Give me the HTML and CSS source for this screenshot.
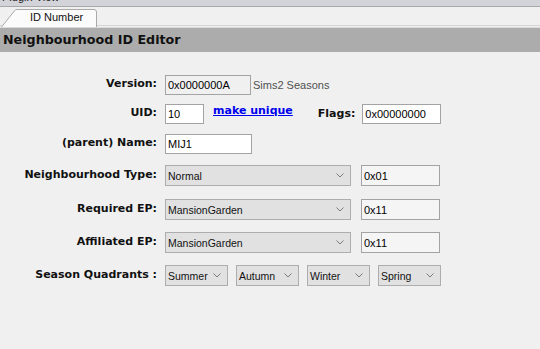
FILE: index.html
```html
<!DOCTYPE html>
<html lang="en">
<head>
  <meta charset="UTF-8">
  <title>Plugin View - ID Number</title>
  <link rel="stylesheet" href="styles.css">
</head>
<body>
<div class="titlebar"><span>Plugin View</span></div>

<div class="tabstrip">
  <div class="tab">
    <svg class="tab-shape" width="97" height="18" viewBox="0 0 97 18">
      <path d="M0.5 18 L13.5 1.8 Q14.5 0.5 16 0.5 L93 0.5 Q95.5 0.5 95.5 3 L95.5 18" fill="#fbfbfb" stroke="#a9a9a9"/>
    </svg>
    <span class="tab-label">ID Number</span>
  </div>
</div>

<div class="header">Neighbourhood ID Editor</div>

<div class="form">
  <div class="row">
    <div class="label">Version:</div>
    <input class="field readonly w-version" value="0x0000000A" readonly>
    <span class="note">Sims2 Seasons</span>
  </div>

  <div class="row">
    <div class="label">UID:</div>
    <input class="field w-uid" value="10">
    <a class="link" href="#">make unique</a>
    <div class="label label-inline">Flags:</div>
    <input class="field w-flags" value="0x00000000">
  </div>

  <div class="row row-name">
    <div class="label">(parent) Name:</div>
    <input class="field w-name" value="MIJ1">
  </div>

  <div class="row row-type">
    <div class="label">Neighbourhood Type:</div>
    <div class="combo w-combo"><span>Normal</span><svg class="chev" width="8" height="5" viewBox="0 0 8 5"><path d="M0.5 0.5 L4 4 L7.5 0.5" fill="none" stroke="#7a7a7a"/></svg></div>
    <input class="field hex" value="0x01">
  </div>

  <div class="row row-combo">
    <div class="label">Required EP:</div>
    <div class="combo w-combo"><span>MansionGarden</span><svg class="chev" width="8" height="5" viewBox="0 0 8 5"><path d="M0.5 0.5 L4 4 L7.5 0.5" fill="none" stroke="#7a7a7a"/></svg></div>
    <input class="field hex" value="0x11">
  </div>

  <div class="row row-combo">
    <div class="label">Affiliated EP:</div>
    <div class="combo w-combo"><span>MansionGarden</span><svg class="chev" width="8" height="5" viewBox="0 0 8 5"><path d="M0.5 0.5 L4 4 L7.5 0.5" fill="none" stroke="#7a7a7a"/></svg></div>
    <input class="field hex" value="0x11">
  </div>

  <div class="row row-combo">
    <div class="label">Season Quadrants :</div>
    <div class="seasons">
      <div class="combo w-season"><span>Summer</span><svg class="chev" width="8" height="5" viewBox="0 0 8 5"><path d="M0.5 0.5 L4 4 L7.5 0.5" fill="none" stroke="#7a7a7a"/></svg></div>
      <div class="combo w-season"><span>Autumn</span><svg class="chev" width="8" height="5" viewBox="0 0 8 5"><path d="M0.5 0.5 L4 4 L7.5 0.5" fill="none" stroke="#7a7a7a"/></svg></div>
      <div class="combo w-season"><span>Winter</span><svg class="chev" width="8" height="5" viewBox="0 0 8 5"><path d="M0.5 0.5 L4 4 L7.5 0.5" fill="none" stroke="#7a7a7a"/></svg></div>
      <div class="combo w-season"><span>Spring</span><svg class="chev" width="8" height="5" viewBox="0 0 8 5"><path d="M0.5 0.5 L4 4 L7.5 0.5" fill="none" stroke="#7a7a7a"/></svg></div>
    </div>
  </div>
</div>
</body>
</html>
```

FILE: styles.css
```css
body {
  margin: 0;
  background-color: #f0f0f0;
  font-family: "Liberation Sans", Arial, sans-serif;
  font-size: 11px;
  color: #000;
  height: 349px;
  overflow: hidden;
}
.titlebar {
  height: 6px;
  background-color: #d3d3da;
  border-bottom: 1px solid #a8a8a8;
  overflow: hidden;
}
.titlebar span {
  display: block;
  margin-top: -9px;
  padding-left: 2px;
  line-height: 13px;
  color: #222;
}
.tabstrip {
  height: 16px;
  padding-top: 2px;
  border-bottom: 1px solid #d4d4d4;
}
.tab {
  position: relative;
  width: 97px;
  height: 17px;
  margin-left: 1px;
}
.tab-shape {
  position: absolute;
  left: 0;
  top: 0;
}
.tab-label {
  position: relative;
  display: block;
  padding-left: 29px;
  line-height: 17px;
  color: #111;
}
.header {
  margin-top: 1px;
  border-top: 1px solid #dadada;
  height: 24px;
  line-height: 24px;
  background-color: #acacac;
  padding-left: 3px;
  font-family: "DejaVu Sans", Verdana, sans-serif;
  font-weight: bold;
  font-size: 12.7px;
  color: #111;
}
.form {
  display: flex;
  flex-direction: column;
  padding-top: 23px;
}
.row {
  display: flex;
  align-items: center;
  height: 20px;
  margin-bottom: 9px;
}
.row-name {
  margin-top: 1px;
}
.row-type {
  margin-top: 2px;
  height: 21px;
  margin-bottom: 13px;
}
.row-combo {
  height: 21px;
  margin-bottom: 12px;
}
.label {
  width: 157px;
  margin-right: 8px;
  padding-bottom: 3px;
  text-align: right;
  font-family: "DejaVu Sans", Verdana, sans-serif;
  font-weight: bold;
  font-size: 11px;
  color: #111;
  white-space: nowrap;
}
.label-inline {
  width: auto;
  margin-left: 25px;
  margin-right: 7px;
  padding-bottom: 1px;
}
.field {
  box-sizing: border-box;
  height: 20px;
  margin: 0;
  padding: 0 2px;
  border: 1px solid #a3a3a3;
  background-color: #fff;
  font-family: "Liberation Sans", Arial, sans-serif;
  font-size: 11px;
  color: #000;
}
.readonly {
  background-color: #f0f0f0;
}
.w-version { width: 86px; }
.w-uid { width: 39px; }
.w-flags { width: 79px; }
.w-name { width: 87px; }
.hex {
  width: 79px;
  height: 21px;
  margin-left: 10px;
  background-color: #f5f5f5;
}
.note {
  margin-left: 2px;
  color: #505050;
  padding-bottom: 1px;
}
.link {
  align-self: flex-start;
  margin-left: 9px;
  line-height: 13px;
  font-family: "DejaVu Sans", Verdana, sans-serif;
  font-weight: bold;
  font-size: 11px;
  color: #0000ee;
  text-decoration: underline;
}
.combo {
  box-sizing: border-box;
  display: flex;
  align-items: center;
  justify-content: space-between;
  height: 21px;
  padding: 0 6px 0 2px;
  border: 1px solid #adadad;
  background-color: #e1e1e1;
  font-size: 10.5px;
  color: #111;
}
.combo span {
  padding-top: 1px;
}
.w-combo { width: 186px; }
.w-season { width: 63px; }
.seasons {
  display: flex;
  gap: 8px;
}
```
